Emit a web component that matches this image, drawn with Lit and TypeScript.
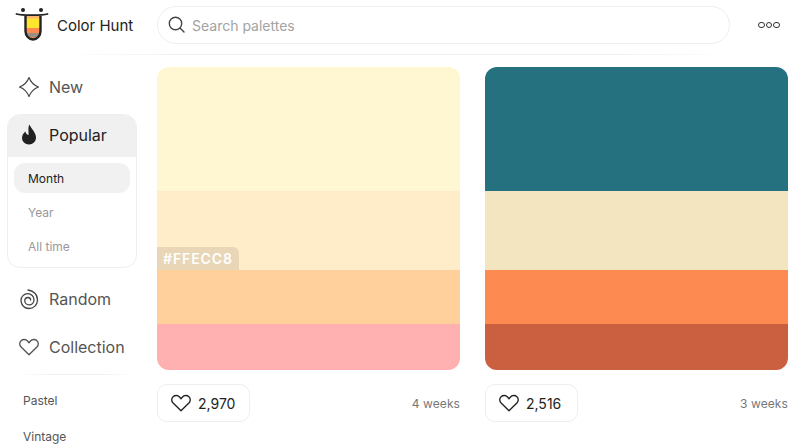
import { LitElement, html, css } from "lit";
import { customElement } from "lit/decorators.js";

const heart = (size: number) => html`<svg class="ico" width=${size} height=${size} viewBox="0 0 24 24" fill="none" stroke="currentColor" stroke-width="1.500" stroke-linejoin="round"><path d="M12 20.500 3.400 12C1.300 9.800 1.500 6.800 3.400 5.100c2-1.800 5.200-1.600 7 .4L12 7.300l1.600-1.800c1.800-2 5-2.200 7-.4 1.900 1.700 2.100 4.700 0 6.900z"/></svg>`;

const palettes = [
  { colors: ["#fff7d1", "#ffecc8", "#ffd09b", "#ffb0b0"], likes: "2,970", age: "4 weeks", tag: true },
  { colors: ["#257180", "#f2e5bf", "#fd8b51", "#cb6040"], likes: "2,516", age: "3 weeks", tag: false },
];

@customElement("app-root")
export class AppRoot extends LitElement {
  static styles = css`
    :host { display: block; width: 793px; height: 446px; overflow: hidden; background: #fff; font-family: Inter, "Liberation Sans", sans-serif; color: #222; }
    .ico { display: block; flex: none; }
    header { display: flex; align-items: center; height: 55px; position: relative; }
    header::after { content: ""; position: absolute; left: 57px; width: 678px; bottom: 0; height: 1px; background: linear-gradient(90deg, #fff, #efefef 20%, #efefef 80%, #fff); }
    .logo { margin-left: 15px; width: 34px; height: 36px; flex: none; margin-top: -7px; }
    .brand { margin-left: 8px; width: 100px; font-size: 15px; font-weight: 400; color: #222; white-space: nowrap; margin-top: -4px; }
    .search { box-sizing: border-box; width: 573px; height: 38px; margin-top: -5px; border: 1px solid #eee; border-radius: 19px; display: flex; align-items: center; gap: 5px; padding-left: 9px; font-size: 14px; color: #a3a3a3; }
    .search svg { color: #444; }
    .dots { margin-left: 28px; display: flex; gap: 1px; margin-top: -5px; }
    .dots span { width: 4.600px; height: 4.600px; border: 1.300px solid #333; border-radius: 50%; box-sizing: content-box; }
    .body { display: grid; grid-template-columns: 157px 1fr; }
    nav { padding: 8px 20px 0 7px; display: flex; flex-direction: column; }
    .item { height: 48px; display: flex; align-items: center; gap: 9px; padding-left: 11px; font-size: 16px; color: #555; }
    .box { border: 1px solid #eee; border-radius: 13px; overflow: hidden; height: 154px; box-sizing: border-box; margin: 3px 0 7px; }
    .box-head { box-sizing: border-box; height: 42px; padding: 0 0 2px 10px; background: #f0f0f0; display: flex; align-items: center; gap: 9px; font-size: 16px; color: #222; }
    .sub { padding: 6px 6px 0; display: flex; flex-direction: column; }
    .sub div { height: 30px; padding-left: 14px; display: flex; align-items: center; font-size: 12px; color: #999; margin-bottom: 4px; border-radius: 11px; }
    .sub div.on { background: #f1f1f1; color: #222; }
    .rule { height: 1px; margin: 3px 4px 0 12px; background: linear-gradient(90deg, #fff, #efefef 30%, #efefef 70%, #fff); }
    .tag-link { font-size: 12px; color: #555; padding-left: 16px; height: 36px; display: flex; align-items: center; }
    .tag-link.first { margin-top: 7px; }
    main { display: grid; grid-template-columns: 303px 303px; gap: 25px; padding-top: 12px; }
    .stripes { height: 303px; border-radius: 12px; overflow: hidden; display: grid; grid-template-rows: 124px 79px 54px 46px; }
    .stripe { position: relative; }
    .tag { position: absolute; left: 0; bottom: 0; height: 23px; box-sizing: border-box; padding: 0 6px; display: flex; align-items: center; background: rgba(0,0,0,.09); border-top-right-radius: 6px; color: #fff; font-size: 14px; font-weight: 600; letter-spacing: .9px; }
    .foot { display: flex; align-items: center; justify-content: space-between; margin-top: 14px; }
    .like { box-sizing: border-box; width: 93px; height: 38px; border: 1px solid #eee; border-radius: 10px; display: flex; align-items: center; gap: 6px; padding-left: 12px; font-size: 14px; color: #222; }
    .age { font-size: 12px; color: #777; letter-spacing: .1px; }
  `;

  render() {
    return html`
      <header>
        <svg class="logo" viewBox="0 0 34 36" fill="none">
          <path d="M10.500 10h15v15a7.500 8.500 0 0 1-15 0z" fill="#ffe62e"/>
          <path d="M10.500 10h15v2.500h-15z" fill="#ffb870"/>
          <path d="M10.500 22h15v3a7.500 8.500 0 0 1-15 0z" fill="#ff8a50"/>
          <path d="M11 27h14a7.500 7 0 0 1-14 0z" fill="#9a8f86"/>
          <path d="M10.500 10v15a7.500 8.500 0 0 0 15 0V10" stroke="#222" stroke-width="2.400"/>
          <path d="M1.500 8c5 1.600 26 1.600 31 0" stroke="#222" stroke-width="1.800" stroke-linecap="round"/>
          <circle cx="8" cy="4" r="2" fill="#222"/><circle cx="26" cy="4" r="2" fill="#222"/>
        </svg>
        <div class="brand">Color Hunt</div>
        <div class="search">
          <svg class="ico" width="20" height="20" viewBox="0 0 20 20" fill="none" stroke="currentColor" stroke-width="1.400" stroke-linecap="round"><circle cx="8.500" cy="8.500" r="6.200"/><path d="m13 13 4 4"/></svg>
          Search palettes
        </div>
        <div class="dots"><span></span><span></span><span></span></div>
      </header>
      <div class="body">
        <nav>
          <div class="item">
            <svg class="ico" width="22" height="22" viewBox="0 0 22 22" fill="none" stroke="#444" stroke-width="1.200" stroke-linejoin="round"><path d="M11 1.500C12.500 5.500 16.500 9.500 20.500 11 16.500 12.500 12.500 16.500 11 20.500 9.500 16.500 5.500 12.500 1.500 11 5.500 9.500 9.500 5.500 11 1.500z"/></svg>
            New
          </div>
          <div class="box">
            <div class="box-head">
              <svg class="ico" width="22" height="22" viewBox="0 0 22 22"><path d="M11.500.5C12.500 4 18 8 18 13.500 18 17.500 15 20.500 11 20.500 7 20.500 4 17.500 4 14 4 11 5.500 9 7.500 7.500 7.800 9.500 8.500 10.500 10.500 11 11 8 9.500 4 11.500.5z" fill="#222"/></svg>
              Popular
            </div>
            <div class="sub">
              <div class="on">Month</div>
              <div>Year</div>
              <div>All time</div>
            </div>
          </div>
          <div class="item">
            <svg class="ico" width="22" height="22" viewBox="0 0 22 22" fill="none" stroke="#444" stroke-width="1.300" stroke-linecap="round"><path d="M10 2C15 2.500 19.500 6 19.500 12 19.500 17 15.500 20.500 11 20.500 6.500 20.500 3 17 3 12.500 3 8.500 6 5.700 9.800 5.700 13.300 5.700 16 8.300 16 11.700 16 14.800 13.700 16.800 11 16.800 8.500 16.800 6.800 15 6.800 12.800 6.800 10.800 8.300 9.500 10 9.500 11.500 9.500 12.600 10.500 12.600 12"/></svg>
            Random
          </div>
          <div class="item">${heart(22)}Collection</div>
          <div class="rule"></div>
          <div class="tag-link first">Pastel</div>
          <div class="tag-link">Vintage</div>
        </nav>
        <main>
          ${palettes.map((p) => html`
            <div>
              <div class="stripes">
                ${p.colors.map((c, i) => html`<div class="stripe" style="background:${c}">${p.tag && i === 1 ? html`<div class="tag">#FFECC8</div>` : ""}</div>`)}
              </div>
              <div class="foot">
                <div class="like">${heart(22)}${p.likes}</div>
                <div class="age">${p.age}</div>
              </div>
            </div>
          `)}
        </main>
      </div>
    `;
  }
}
